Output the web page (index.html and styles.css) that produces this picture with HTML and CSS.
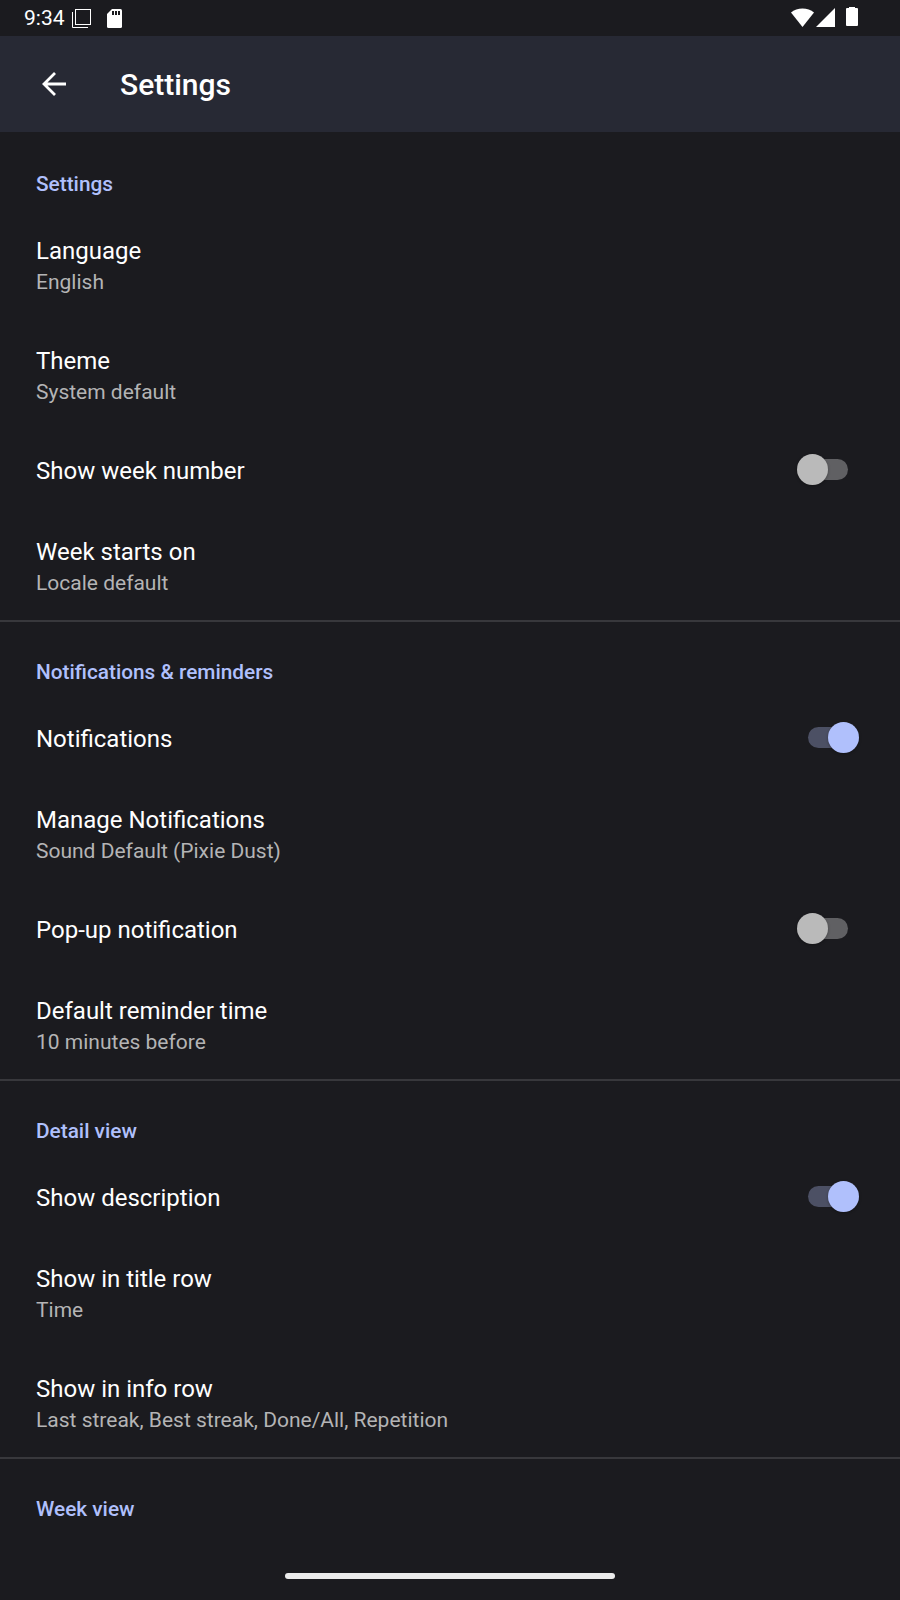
FILE: index.html
```html
<!DOCTYPE html>
<html lang="en">
<head>
    <meta charset="UTF-8">
    <title>Settings</title>
    <link rel="stylesheet" href="styles.css">
</head>
<body>
    <div class="status-bar">
        <span class="clock">9:34</span>
        <svg class="icon-copy" width="20" height="20" viewBox="0 0 20 20" fill="none" stroke="#fff">
            <rect x="3.5" y="0.5" width="15" height="15"/>
            <path d="M0.5 3v15.5H16"/>
        </svg>
        <svg class="icon-sd" width="15" height="19" viewBox="0 0 15 19">
            <path fill="#fff" d="M5 0h8.500q1.500 0 1.500 1.500v16q0 1.500-1.500 1.500h-12q-1.500 0-1.500-1.500V5z"/>
            <path fill="#1b1b1f" d="M5 2h2v4H5zM8 2h2v4H8zM11 2h2v4h-2z"/>
        </svg>
        <svg class="icon-signal" width="68" height="20" viewBox="0 0 68 20" fill="#fff">
            <path d="M0 5.500C6 0 17 0 23 5.500L11.500 20z"/>
            <path d="M44 1v19H25z"/>
            <path d="M58 0h6v1h2q1 0 1 1v16q0 1-1 1H56q-1 0-1-1V2q0-1 1-1h2z"/>
        </svg>
    </div>

    <div class="app-bar">
        <svg width="24" height="24" viewBox="0 0 24 24" fill="none" stroke="#fff" stroke-width="2.800">
            <path d="M24 12H2.500M13 1L2 12l11 11"/>
        </svg>
        <h1>Settings</h1>
    </div>

    <div class="section first">
        <h2>Settings</h2>
        <div class="row">
            <div class="title">Language</div>
            <div class="summary">English</div>
        </div>
        <div class="row">
            <div class="title">Theme</div>
            <div class="summary">System default</div>
        </div>
        <div class="row toggle">
            <div class="title">Show week number</div>
            <div class="switch"></div>
        </div>
        <div class="row">
            <div class="title">Week starts on</div>
            <div class="summary">Locale default</div>
        </div>
    </div>

    <div class="section">
        <h2>Notifications &amp; reminders</h2>
        <div class="row toggle">
            <div class="title">Notifications</div>
            <div class="switch on"></div>
        </div>
        <div class="row">
            <div class="title">Manage Notifications</div>
            <div class="summary">Sound Default (Pixie Dust)</div>
        </div>
        <div class="row toggle">
            <div class="title">Pop-up notification</div>
            <div class="switch"></div>
        </div>
        <div class="row">
            <div class="title">Default reminder time</div>
            <div class="summary">10 minutes before</div>
        </div>
    </div>

    <div class="section">
        <h2>Detail view</h2>
        <div class="row toggle">
            <div class="title">Show description</div>
            <div class="switch on"></div>
        </div>
        <div class="row">
            <div class="title">Show in title row</div>
            <div class="summary">Time</div>
        </div>
        <div class="row">
            <div class="title">Show in info row</div>
            <div class="summary">Last streak, Best streak, Done/All, Repetition</div>
        </div>
    </div>

    <div class="section last">
        <h2>Week view</h2>
    </div>

    <div class="nav-handle"></div>
</body>
</html>
```
FILE: styles.css
```css
* {
    box-sizing: border-box;
}
body {
    display: flex;
    flex-direction: column;
    height: 1600px;
    margin: 0;
    overflow: hidden;
    background-color: #1b1b1f;
    color: #fff;
    font-family: Roboto, sans-serif;
}
.status-bar {
    display: flex;
    align-items: flex-start;
    height: 36px;
    padding: 5px 32px 0 24px;
}
.clock {
    width: 48px;
    padding-top: 1px;
    font-size: 21px;
    line-height: 25px;
}
.icon-copy {
    margin-top: 4px;
}
.icon-sd {
    margin: 4px 0 0 15px;
}
.icon-signal {
    margin: 2px 9px 0 auto;
}
.app-bar {
    display: flex;
    align-items: center;
    height: 96px;
    padding-left: 42px;
    background-color: #272934;
}
h1 {
    margin: 0 0 0 54px;
    padding-top: 2px;
    font-size: 30px;
    font-weight: 500;
    line-height: 36px;
}
.section {
    border-bottom: 2px solid #38383c;
}
.section.last {
    border-bottom: none;
}
h2 {
    height: 77px;
    margin: 0;
    padding: 38px 36px 0;
    color: #b0c0fc;
    font-size: 20.8px;
    font-weight: 500;
    line-height: 25px;
}
.first h2 {
    height: 79px;
    padding-top: 40px;
}
.row {
    height: 110px;
    padding: 26px 36px 0;
}
.row:last-child {
    height: 108px;
}
.title {
    font-size: 24px;
    line-height: 28px;
}
.summary {
    margin-top: 5px;
    color: #b4b4b5;
    font-size: 21px;
    line-height: 25px;
}
.toggle {
    display: flex;
    justify-content: space-between;
    height: 81px;
}
.switch {
    position: relative;
    width: 40px;
    height: 21px;
    margin: 2px 16px 0 0;
    border-radius: 11px;
    background-color: #606063;
}
.switch::after {
    content: "";
    position: absolute;
    top: -5px;
    left: -11px;
    width: 31px;
    height: 31px;
    border-radius: 50%;
    background-color: #bababa;
    box-shadow: 0 1px 3px rgba(0,0,0,0.3);
}
.switch.on {
    background-color: #4c5064;
}
.switch.on::after {
    left: 20px;
    background-color: #b0c0fc;
}
.nav-handle {
    width: 330px;
    height: 6px;
    margin: auto auto 21px;
    border-radius: 3px;
    background-color: #ececec;
}
```
